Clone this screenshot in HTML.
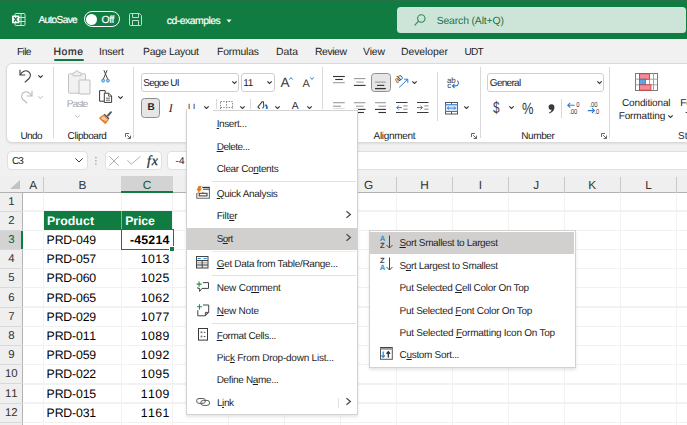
<!DOCTYPE html><html><head><meta charset="utf-8"><title>Excel</title>
<style>
*{box-sizing:border-box;margin:0;padding:0}
html,body{width:687px;height:425px;overflow:hidden;background:#fff}
body{text-rendering:geometricPrecision;font-family:"Liberation Sans",sans-serif;font-size:10.4px;color:#242424;position:relative}
.a{position:absolute}
.t{position:absolute;white-space:nowrap;line-height:14px;height:14px;margin-top:1px}
.m{font-size:10px;color:#1f1f1f;margin-top:1.4px}
.c{margin-top:0.2px;font-kerning:none;font-size:12.3px;color:#000}
.g{color:#a6a6a6}
.r{font-size:10px}
u{text-decoration:underline;text-underline-offset:1px;text-decoration-thickness:1px}
svg{position:absolute;overflow:visible}
.vs{position:absolute;width:1px;background:#d9d9d9}
.hs{position:absolute;height:1px;background:#e1e1e1}
.box{position:absolute;background:#fff;border:1px solid #cfcfcf;border-radius:3px}
</style></head><body>
<!-- title bar -->
<div class="a" id="title" style="left:0;top:0;width:687px;height:39px;background:#107c41"></div>
<div class="a" style="left:0;top:0;width:687px;height:0.8px;background:#257349"></div>
<div class="a" id="chrome" style="left:0;top:39px;width:687px;height:154px;background:#f1f1f1"></div>

<!-- title content -->
<svg id="xlicon" style="left:12.4px;top:13.4px" width="14" height="13" viewBox="0 0 14 13">
 <rect x="3" y="0.5" width="10" height="12" rx="1" fill="none" stroke="#cfe5d8" stroke-width="1"></rect>
 <path d="M3 4.5H13M3 8.5H13M9 0.5V12.5" stroke="#cfe5d8" stroke-width="1" fill="none"></path>
 <rect x="0" y="2.5" width="7.4" height="7.8" rx="0.6" fill="#fff"></rect>
 <path d="M2 4.2L5.4 8.6M5.4 4.2L2 8.6" stroke="#107c41" stroke-width="1.3" fill="none"></path>
</svg>
<span class="t" style="left: 38.4px; color: rgb(255, 255, 255); font-size: 10.1px; -webkit-text-stroke: 0.2px rgb(255, 255, 255); top: 12.7px; letter-spacing: -0.64px;">AutoSave</span>
<div class="a" style="left:83.9px;top:11.1px;width:36.2px;height:16.1px;border:1px solid #fff;border-radius:9px"></div>
<div class="a" style="left:86.1px;top:13.6px;width:11px;height:11px;border-radius:5.5px;background:#fff"></div>
<span class="t" style="left: 101.6px; color: rgb(255, 255, 255); -webkit-text-stroke: 0.2px rgb(255, 255, 255); top: 12.5px; letter-spacing: -0.44px;">Off</span>
<svg id="save" style="left:129px;top:13px" width="13" height="13" viewBox="0 0 13 13" fill="none" stroke="#c2dece" stroke-width="1">
 <path d="M0.5 1.5a1 1 0 0 1 1-1H10.5L12.5 2.5V11.5a1 1 0 0 1-1 1H1.5a1 1 0 0 1-1-1Z"></path>
 <path d="M3.5 0.5V4.5H9.5V0.5M3.5 12.5V7.5H9.5V12.5"></path>
</svg>
<span class="t" style="left: 166.8px; color: rgb(255, 255, 255); -webkit-text-stroke: 0.2px rgb(255, 255, 255); top: 13.8px; letter-spacing: -0.49px;">cd-examples</span>
<svg style="left:226.3px;top:18.6px" width="6" height="4" viewBox="0 0 6 4"><path d="M0.5 0.5H5.5L3 3.5Z" fill="#fff"></path></svg>
<div class="a" style="left:397.2px;top:6.8px;width:289px;height:26px;background:#cde5d9;border-radius:3.5px"></div>
<svg style="left:414px;top:14px" width="12" height="12" viewBox="0 0 12 12" fill="none" stroke="#2f8556" stroke-width="1.1"><circle cx="7.3" cy="4.5" r="3.7"></circle><path d="M4.6 7.2L0.6 11.3"></path></svg>
<span class="t" style="left: 436.7px; color: rgb(30, 113, 69); top: 13.7px; letter-spacing: -0.14px;">Search (Alt+Q)</span>

<!-- tabs -->
<span class="t" style="left: 17px; font-size: 10.2px; top: 44.5px; letter-spacing: -0.64px;">File</span>
<span class="t" style="left: 53.5px; -webkit-text-stroke: 0.22px rgb(36, 36, 36); top: 44.5px; letter-spacing: 0.59px;">Home</span>
<div class="a" style="left:53.5px;top:59px;width:30px;height:2px;background:#107c41;border-radius:1px"></div>
<span class="t" style="left: 99px; top: 44.5px; letter-spacing: -0.2px;">Insert</span>
<span class="t" style="left: 143px; top: 44.5px; letter-spacing: -0.24px;">Page Layout</span>
<span class="t" style="left: 217px; top: 44.5px; letter-spacing: -0.19px;">Formulas</span>
<span class="t" style="left: 276px; top: 44.5px; letter-spacing: 0.02px;">Data</span>
<span class="t" style="left: 315px; top: 44.5px; letter-spacing: -0.42px;">Review</span>
<span class="t" style="left: 363px; top: 44.5px; letter-spacing: -0.11px;">View</span>
<span class="t" style="left: 401px; top: 44.5px; letter-spacing: -0.05px;">Developer</span>
<span class="t" style="left: 464.6px; font-size: 10.1px; top: 44.5px; letter-spacing: -0.87px;">UDT</span>

<!-- ribbon -->
<div class="a" id="ribbon" style="left:5.5px;top:63px;width:700px;height:79.5px;background:#fff;border:1px solid #dadada;border-radius:6px;box-shadow:0 1px 2px rgba(0,0,0,.08)"></div>
<div class="vs" style="left:53px;top:67px;height:71px"></div>
<div class="vs" style="left:133px;top:67px;height:71px"></div>
<div class="vs" style="left:322px;top:67px;height:71px"></div>
<div class="vs" style="left:436.5px;top:72px;height:49px"></div>
<div class="vs" style="left:480px;top:67px;height:71px"></div>
<div class="vs" style="left:609px;top:67px;height:71px"></div>
<div class="vs" style="left:215.5px;top:98.5px;height:19px"></div>
<div class="vs" style="left:250px;top:98.5px;height:19px"></div>
<div class="vs" style="left:561px;top:99px;height:18.5px"></div>

<!-- undo group -->
<svg id="undo" style="left:19px;top:69px" width="13" height="14" viewBox="0 0 13 14" fill="none" stroke="#3a3a3a" stroke-width="1.1">
 <path d="M1 0.8V6H6.2"></path><path d="M1.3 5.7C3 2.5 6.5 0.8 9.3 2.5C12 4.2 12 7.5 10 9.5L5.8 13.4"></path>
</svg>
<svg class="chev" style="left:38px;top:75px" width="5" height="3" viewBox="0 0 5 3"><path d="M0.3 0.3L2.5 2.5L4.7 0.3" fill="none" stroke="#333" stroke-width="1.1"></path></svg>
<svg id="redo" style="left:19.5px;top:89.5px" width="13" height="14" viewBox="0 0 13 14" fill="none" stroke="#b9b9b9" stroke-width="1.1">
 <g transform="translate(13,0) scale(-1,1)"><path d="M1 0.8V6H6.2"></path><path d="M1.3 5.7C3 2.5 6.5 0.8 9.3 2.5C12 4.2 12 7.5 10 9.5L5.8 13.4"></path></g>
</svg>
<svg class="chev" style="left:38px;top:95.5px" width="5" height="3" viewBox="0 0 5 3"><path d="M0.3 0.3L2.5 2.5L4.7 0.3" fill="none" stroke="#b9b9b9" stroke-width="1"></path></svg>
<span class="t r" style="left: 20.4px; top: 128.5px; letter-spacing: -0.57px;">Undo</span>

<!-- clipboard group -->
<svg id="paste" style="left:68px;top:69.6px" width="23" height="25" viewBox="0 0 23 25" fill="none" stroke="#c3c3c3" stroke-width="1">
 <path d="M5.5 3.8H1.3a0.8 0.8 0 0 0-0.8 0.8V22.4a0.8 0.8 0 0 0 0.8 0.8H16.7a0.8 0.8 0 0 0 0.8-0.8V4.6a0.8 0.8 0 0 0-0.8-0.8H12.5" fill="#f1f1f1"></path>
 <path d="M5 5.8V3.4a0.8 0.8 0 0 1 0.8-0.8h1.4a1.8 1.8 0 0 1 3.6 0h1.4a0.8 0.8 0 0 1 0.8 0.8V5.8Z" fill="#f1f1f1"></path>
 <rect x="11" y="10" width="11" height="14" rx="0.5" fill="#f4f4f4" stroke="#bdbdbd"></rect>
</svg>
<span class="t r g" style="left: 66.7px; top: 97px; letter-spacing: -0.97px;">Paste</span>
<svg class="chev" style="left:74.5px;top:114.5px" width="5" height="3" viewBox="0 0 5 3"><path d="M0.3 0.3L2.5 2.5L4.7 0.3" fill="none" stroke="#b9b9b9" stroke-width="1"></path></svg>
<svg id="cut" style="left:101px;top:70px" width="9" height="13" viewBox="0 0 9 13" fill="none">
 <path d="M2.9 0.2L6.7 9.2M6.1 0.2L2.3 9.2" stroke="#444" stroke-width="1"></path>
 <circle cx="2.1" cy="10.6" r="1.5" fill="#9ccaf0" stroke="#3a8ede" stroke-width="0.9"></circle><circle cx="6.9" cy="10.6" r="1.5" fill="#9ccaf0" stroke="#3a8ede" stroke-width="0.9"></circle>
</svg>
<svg id="copy" style="left:99px;top:90.4px" width="13" height="13" viewBox="0 0 13 13" fill="none" stroke="#3a3a3a" stroke-width="1">
 <path d="M5 11.2H0.6V0.6H6.2V2.8"></path>
 <path d="M5.3 3.2H9.8L12.6 6V12.4H5.3Z" fill="#fff"></path>
 <path d="M9.6 3.4V6.2H12.4" stroke-width="0.8"></path>
 <path d="M7 8.2H11M7 10.2H11" stroke-width="0.9" stroke="#555"></path>
</svg>
<svg class="chev" style="left:117.7px;top:96px" width="5" height="3" viewBox="0 0 5 3"><path d="M0.3 0.3L2.5 2.5L4.7 0.3" fill="none" stroke="#333" stroke-width="1.1"></path></svg>
<svg id="fpaint" style="left:99px;top:110.5px" width="14" height="13" viewBox="0 0 14 13" fill="none">
 <path d="M9 4.5L12 1.2" stroke="#555" stroke-width="1.9" stroke-linecap="round"></path>
 <path d="M5.2 3.2L10 7.8" stroke="#444" stroke-width="1.2"></path>
 <path d="M4.6 4.2L9.2 8.6L6.2 12.4L0.6 7.2Z" fill="#f6c9a0" stroke="#e8761c" stroke-width="1.1" stroke-linejoin="round"></path>
 <path d="M2.2 8.6L7.4 10.8" stroke="#e8761c" stroke-width="1"></path>
</svg>
<span class="t r" style="left: 67.6px; top: 128.5px; letter-spacing: -0.44px;">Clipboard</span>
<svg class="launch" style="left:124.5px;top:132.5px" width="6" height="6" viewBox="0 0 6 6" fill="none" stroke="#555" stroke-width="0.9"><path d="M0.5 4V0.5H4"></path><path d="M2.2 2.2L5.3 5.3M5.5 2.6V5.5H2.6"></path></svg>

<!-- font group -->
<div class="box" style="left:141px;top:73px;width:97.5px;height:19px"></div>
<span class="t r" style="left: 143.3px; top: 76.1px; letter-spacing: -0.79px;">Segoe UI</span>
<svg class="chev" style="left:231.5px;top:81px" width="5" height="3" viewBox="0 0 5 3"><path d="M0.3 0.3L2.5 2.5L4.7 0.3" fill="none" stroke="#333" stroke-width="1.1"></path></svg>
<div class="box" style="left:241px;top:73px;width:33.5px;height:19px"></div>
<span class="t r" style="left: 243.3px; letter-spacing: -0.4px; top: 76.1px;">11</span>
<svg class="chev" style="left:267.3px;top:81px" width="5" height="3" viewBox="0 0 5 3"><path d="M0.3 0.3L2.5 2.5L4.7 0.3" fill="none" stroke="#333" stroke-width="1.1"></path></svg>
<span class="t" style="left: 280.4px; font-size: 13.6px; color: rgb(58, 58, 58); top: 74.5px;">A</span>
<svg style="left:289px;top:76.5px" width="4" height="3" viewBox="0 0 4 3"><path d="M0.3 2.6L2 0.6L3.7 2.6" fill="none" stroke="#2b7cd3" stroke-width="1"></path></svg>
<span class="t" style="left: 302.6px; font-size: 11px; color: rgb(58, 58, 58); top: 75.5px;">A</span>
<svg style="left:309.6px;top:76.8px" width="4" height="3" viewBox="0 0 4 3"><path d="M0.3 0.4L2 2.4L3.7 0.4" fill="none" stroke="#2b7cd3" stroke-width="1"></path></svg>

<div class="a" style="left:141px;top:98px;width:19px;height:19.8px;background:#e6e6e6;border:1px solid #8f8f8f;border-radius:3.5px"></div>
<span class="t" style="left: 147.5px; font-weight: bold; font-size: 10px; top: 100.2px;">B</span>
<span class="t" style="left: 168.8px; font-family: &quot;Liberation Serif&quot;, serif; font-style: italic; font-size: 12px; top: 100.2px;">I</span>
<span class="t" style="left: 187.8px; font-size: 10.6px; color: rgb(85, 85, 85); top: 100.2px;">U</span>
<svg class="chev" style="left:204.2px;top:106.2px" width="5" height="3" viewBox="0 0 5 3"><path d="M0.3 0.3L2.5 2.5L4.7 0.3" fill="none" stroke="#333" stroke-width="1.1"></path></svg>
<svg id="borders" style="left:220px;top:101px" width="13" height="13" viewBox="0 0 13 13" fill="none" stroke="#8a8a8a" stroke-width="1" stroke-dasharray="1.5 1.2"><rect x="0.5" y="0.5" width="12" height="12"></rect><path d="M6.5 0.5V12.5M0.5 6.5H12.5"></path></svg>
<svg class="chev" style="left:240px;top:106.2px" width="5" height="3" viewBox="0 0 5 3"><path d="M0.3 0.3L2.5 2.5L4.7 0.3" fill="none" stroke="#333" stroke-width="1.1"></path></svg>
<svg id="fill" style="left:257px;top:101px" width="11" height="12" viewBox="0 0 11 12" fill="none" stroke="#444" stroke-width="1.1"><path d="M2.8 7.8L0.9 6L5 0.8H6.4L6.8 5.4L5.6 7.6"></path><path d="M8.4 3.6C10 5 10.4 6.6 9.6 8.4" stroke="#1f6fd0" stroke-width="1.7"></path></svg>
<svg class="chev" style="left:274.8px;top:106.2px" width="5" height="3" viewBox="0 0 5 3"><path d="M0.3 0.3L2.5 2.5L4.7 0.3" fill="none" stroke="#333" stroke-width="1.1"></path></svg>
<span class="t" style="left: 291.7px; font-size: 10.3px; color: rgb(46, 46, 46); top: 98.5px;">A</span>
<svg class="chev" style="left:307.2px;top:106.2px" width="5" height="3" viewBox="0 0 5 3"><path d="M0.3 0.3L2.5 2.5L4.7 0.3" fill="none" stroke="#333" stroke-width="1.1"></path></svg>

<!-- alignment group -->
<svg id="al1" style="left:333px;top:75px" width="12" height="9" viewBox="0 0 12 9" fill="none" stroke-width="1.1"><path d="M0 1.5H11.8" stroke="#333"></path><path d="M2.2 4.5H9.8" stroke="#333"></path><path d="M0 7.7H11.8" stroke="#9a9a9a"></path></svg>
<svg id="al2" style="left:354px;top:77px" width="12" height="10" viewBox="0 0 12 10" fill="none" stroke-width="1.1"><path d="M0 1.6H11.5" stroke="#9a9a9a"></path><path d="M2.4 5.1H9.6" stroke="#9a9a9a"></path><path d="M0 8.4H11.5" stroke="#333"></path></svg>
<div class="a" style="left:371px;top:73px;width:19.5px;height:19px;background:#e6e6e6;border:1px solid #8f8f8f;border-radius:3.5px"></div>
<svg id="al3" style="left:375.2px;top:80px" width="12" height="10" viewBox="0 0 12 10" fill="none" stroke-width="1.1"><path d="M0 2.1H10.8" stroke="#9a9a9a"></path><path d="M2 5.4H9.3" stroke="#333"></path><path d="M0 8.6H10.8" stroke="#333" stroke-width="1.3"></path></svg>
<svg id="orient" style="left:394px;top:75px" width="15" height="14" viewBox="0 0 15 14" fill="none"><path d="M5.2 12.4L13.6 4.4M13.8 4.2H10.2M13.8 4.2V7.8" stroke="#2b7cd3" stroke-width="1"></path><text x="0" y="0" transform="translate(3.2,8.6) rotate(-45)" font-size="8.2" fill="#3a3a3a" font-family="Liberation Sans, sans-serif" letter-spacing="-0.4">ab</text></svg>
<svg class="chev" style="left:412.2px;top:81px" width="5" height="3" viewBox="0 0 5 3"><path d="M0.3 0.3L2.5 2.5L4.7 0.3" fill="none" stroke="#333" stroke-width="1.1"></path></svg>

<svg id="al4" style="left:333px;top:101px" width="12" height="13" viewBox="0 0 12 13" fill="none" stroke-width="1.1"><path d="M0 1.7H11.8" stroke="#9a9a9a"></path><path d="M0 5.2H8" stroke="#9a9a9a"></path><path d="M0 8.4H11.8" stroke="#333"></path><path d="M0 11.5H8" stroke="#333"></path></svg>
<svg id="al5" style="left:354px;top:101px" width="12" height="13" viewBox="0 0 12 13" fill="none" stroke-width="1.1"><path d="M0 1.7H11.5" stroke="#9a9a9a"></path><path d="M2 5.2H9.6" stroke="#9a9a9a"></path><path d="M0 8.4H11.5" stroke="#333"></path><path d="M3 11.5H9.9" stroke="#333"></path></svg>
<svg id="al6" style="left:375px;top:101px" width="12" height="13" viewBox="0 0 12 13" fill="none" stroke-width="1.1"><path d="M0 1.7H11" stroke="#9a9a9a"></path><path d="M3.4 5.2H11" stroke="#9a9a9a"></path><path d="M0 8.4H11" stroke="#333"></path><path d="M3.4 11.5H11" stroke="#333"></path></svg>
<svg id="ind1" style="left:395.5px;top:101px" width="12" height="13" viewBox="0 0 12 13" fill="none" stroke-width="1"><path d="M0 1.5H11.5M0 11.5H11.5" stroke="#3a3a3a"></path><path d="M7.3 4.9H11.5M7.3 8.2H11.5" stroke="#8a8a8a"></path><path d="M6 6.6H0.8M2.8 4.6L0.8 6.6L2.8 8.6" stroke="#2b7cd3"></path></svg>
<svg id="ind2" style="left:416.5px;top:101px" width="12" height="13" viewBox="0 0 12 13" fill="none" stroke-width="1"><path d="M0 1.5H11.5M0 11.5H11.5" stroke="#3a3a3a"></path><path d="M7.3 4.9H11.5M7.3 8.2H11.5" stroke="#8a8a8a"></path><path d="M0 6.6H5.4M3.4 4.6L5.4 6.6L3.4 8.6" stroke="#2b7cd3"></path></svg>
<span class="t r" style="left: 373.6px; top: 128.5px; letter-spacing: -0.33px;">Alignment</span>

<svg id="wrap" style="left:447px;top:76px" width="13" height="13" viewBox="0 0 13 13" fill="none"><text x="0" y="6.6" font-size="8" fill="#3a3a3a" font-family="Liberation Sans, sans-serif" letter-spacing="-0.3">ab</text><text x="0.2" y="11.6" font-size="8" fill="#3a3a3a" font-family="Liberation Sans, sans-serif">c</text><path d="M10.3 4.6C12.4 6.4 11.6 9.8 8.6 9.9H5.6M7.6 7.8L5.4 9.9L7.6 12" stroke="#2b7cd3" stroke-width="1.1"></path></svg>
<svg id="merge" style="left:445px;top:101.5px" width="13" height="13" viewBox="0 0 13 13" fill="none" stroke="#555" stroke-width="1"><rect x="0.5" y="0.5" width="12" height="11.5"></rect><path d="M6.5 0.5V3M6.5 9.5V12"></path><rect x="0.5" y="2.7" width="12" height="6.8" fill="#d6e8f9" stroke="#2b7cd3"></rect><path d="M2.3 6.1H10.7M4 4.5L2.4 6.1L4 7.7M9 4.5L10.6 6.1L9 7.7" stroke="#2b7cd3" stroke-width="0.9"></path></svg>
<svg class="chev" style="left:464.2px;top:106.2px" width="5" height="3" viewBox="0 0 5 3"><path d="M0.3 0.3L2.5 2.5L4.7 0.3" fill="none" stroke="#333" stroke-width="1.1"></path></svg>
<svg class="launch" style="left:471px;top:132.5px" width="6" height="6" viewBox="0 0 6 6" fill="none" stroke="#555" stroke-width="0.9"><path d="M0.5 4V0.5H4"></path><path d="M2.2 2.2L5.3 5.3M5.5 2.6V5.5H2.6"></path></svg>

<!-- number group -->
<div class="box" style="left:487px;top:73px;width:117px;height:19px"></div>
<span class="t r" style="left: 489.8px; top: 75.8px; letter-spacing: -0.7px;">General</span>
<svg class="chev" style="left:596.5px;top:81px" width="5" height="3" viewBox="0 0 5 3"><path d="M0.3 0.3L2.5 2.5L4.7 0.3" fill="none" stroke="#333" stroke-width="1.1"></path></svg>
<span class="t" style="left: 492.6px; font-size: 16.4px; color: rgb(68, 68, 68); transform: scaleX(0.72); transform-origin: 0px 50%; top: 100.4px;">$</span>
<svg class="chev" style="left:509px;top:106.2px" width="5" height="3" viewBox="0 0 5 3"><path d="M0.3 0.3L2.5 2.5L4.7 0.3" fill="none" stroke="#333" stroke-width="1.1"></path></svg>
<span class="t" style="left: 522px; font-size: 16.2px; color: rgb(58, 58, 58); transform: scaleX(0.8); transform-origin: 0px 50%; top: 100.6px;">%</span>
<svg id="comma" style="left:547.5px;top:103.5px" width="7" height="10" viewBox="0 0 7 10"><path d="M3.4 0.2a2.9 2.9 0 0 1 3 3C6.4 6.4 4 8.6 1.2 9.4L0.9 8.7C2.4 8 3.5 7 3.7 5.8A2.8 2.8 0 0 1 0.6 3A2.8 2.8 0 0 1 3.4 0.2Z" fill="#3a3a3a"></path></svg>
<svg id="incdec" style="left:566.5px;top:102px" width="14" height="13" viewBox="0 0 14 13" fill="none"><path d="M7.6 3.2H0.8M3.2 0.8L0.8 3.2L3.2 5.6" stroke="#2b7cd3" stroke-width="1.1"></path><text transform="translate(9.2,5.1) scale(0.82,1)" font-size="7.2" fill="#3a3a3a" font-family="Liberation Sans, sans-serif">0</text><text transform="translate(2.2,11.5) scale(0.82,1)" font-size="7.2" fill="#3a3a3a" font-family="Liberation Sans, sans-serif">.00</text></svg>
<svg id="decdec" style="left:587.3px;top:102px" width="14" height="13" viewBox="0 0 14 13" fill="none"><text transform="translate(2.4,5.1) scale(0.82,1)" font-size="7.2" fill="#3a3a3a" font-family="Liberation Sans, sans-serif">.00</text><path d="M0.8 8.6H7.4M5 6.2L7.4 8.6L5 11" stroke="#2b7cd3" stroke-width="1.1"></path><text transform="translate(7.4,11.5) scale(0.82,1)" font-size="7.2" fill="#3a3a3a" font-family="Liberation Sans, sans-serif">.0</text></svg>
<span class="t r" style="left: 521.3px; top: 128.5px; letter-spacing: -0.42px;">Number</span>
<svg class="launch" style="left:600.5px;top:132.5px" width="6" height="6" viewBox="0 0 6 6" fill="none" stroke="#555" stroke-width="0.9"><path d="M0.5 4V0.5H4"></path><path d="M2.2 2.2L5.3 5.3M5.5 2.6V5.5H2.6"></path></svg>

<!-- styles group -->
<svg id="condfmt" style="left:635px;top:73px" width="23" height="18" viewBox="0 0 23 18" fill="none">
 <rect x="0.5" y="0.5" width="22" height="17" fill="#fff" stroke="#7a7a7a" stroke-width="1"></rect>
 <path d="M4.5 0.5V17.5M14.5 0.5V17.5M18.5 0.5V17.5M0.5 6.2H22.5M0.5 11.8H22.5" stroke="#9a9a9a" stroke-width="0.9"></path>
 <rect x="4.5" y="0.8" width="10" height="5.4" fill="#f28b94" stroke="#d13438" stroke-width="0.8"></rect>
 <rect x="4.5" y="6.2" width="6" height="5.6" fill="#5aa5e6" stroke="#2b7cd3" stroke-width="0.8"></rect>
 <rect x="4.5" y="11.8" width="11.5" height="5.4" fill="#f28b94" stroke="#d13438" stroke-width="0.8"></rect>
</svg>
<span class="t r" style="left: 622px; top: 96.3px; letter-spacing: -0.15px;">Conditional</span>
<span class="t r" style="left: 618.7px; top: 108.8px; letter-spacing: -0.14px;">Formatting</span>
<svg class="chev" style="left:668.3px;top:114.8px" width="5" height="3" viewBox="0 0 5 3"><path d="M0.3 0.3L2.5 2.5L4.7 0.3" fill="none" stroke="#333" stroke-width="1.1"></path></svg>
<span class="t r" style="left: 680.2px; top: 96.3px;">Fo</span>
<span class="t r" style="left: 685.3px; top: 108.8px;">T</span>
<span class="t r" style="left: 678px; top: 128.5px;">Sty</span>

<!-- formula bar -->
<div class="box" style="left:6.5px;top:150.7px;width:81.2px;height:19.5px;border-color:#e0e0e0;border-radius:4px"></div>
<span class="t r" style="left: 12px; top: 153.8px; letter-spacing: -1px;">C3</span>
<svg style="left:75px;top:158px" width="8" height="5" viewBox="0 0 8 5"><path d="M0.4 0.4L4 4L7.6 0.4" fill="none" stroke="#3a3a3a" stroke-width="1"></path></svg>
<svg style="left:95px;top:156.5px" width="2" height="8" viewBox="0 0 2 8" fill="#8a8a8a"><rect x="0.3" y="0" width="1.2" height="1.2"></rect><rect x="0.3" y="3.2" width="1.2" height="1.2"></rect><rect x="0.3" y="6.4" width="1.2" height="1.2"></rect></svg>
<div class="box" style="left:104.5px;top:150.7px;width:57.8px;height:19.5px;border-color:#e0e0e0;border-radius:4px"></div>
<svg style="left:109px;top:155.7px" width="10" height="10" viewBox="0 0 10 10"><path d="M0.3 0.3L9.7 9.7M9.7 0.3L0.3 9.7" stroke="#b0b0b0" stroke-width="1" fill="none"></path></svg>
<svg style="left:127px;top:156px" width="14" height="9" viewBox="0 0 14 9"><path d="M0.3 4.2L4.4 8.2L13.4 0.3" stroke="#b0b0b0" stroke-width="1" fill="none"></path></svg>
<span class="t" style="left: 147px; font-family: &quot;Liberation Serif&quot;, serif; font-style: italic; font-size: 13.8px; color: rgb(42, 42, 42); letter-spacing: 0.9px; -webkit-text-stroke: 0.25px rgb(42, 42, 42); top: 153.2px;">fx</span>
<div class="box" style="left:166.7px;top:150.7px;width:540px;height:19.5px;border-color:#e0e0e0;border-radius:4px"></div>
<span class="t r" style="left: 175.6px; top: 153.5px;">-4</span>

<!-- grid -->
<div class="a" id="grid" style="left:0;top:192.6px;width:687px;height:232px;background:#fff"></div>
<div class="a" id="colhdr" style="left:0;top:176px;width:687px;height:16.6px;background:#efefef;border-bottom:1px solid #b2b2b2"></div>
<div class="a" id="rowhdr" style="left:0;top:192.6px;width:23.1px;height:233px;background:#efefef;border-right:1px solid #b2b2b2"></div>
<div class="a" style="left:42.9px;top:193px;width:1.4px;height:232px;background:#f2f2f2"></div>
<div class="a" style="left:43.1px;top:177px;width:1px;height:16px;background:#c9c9c9"></div>
<div class="a" style="left:120.6px;top:193px;width:1.4px;height:232px;background:#f2f2f2"></div>
<div class="a" style="left:120.8px;top:177px;width:1px;height:16px;background:#c9c9c9"></div>
<div class="a" style="left:172.1px;top:193px;width:1.4px;height:232px;background:#f2f2f2"></div>
<div class="a" style="left:172.3px;top:177px;width:1px;height:16px;background:#c9c9c9"></div>
<div class="a" style="left:228.0px;top:193px;width:1.4px;height:232px;background:#f2f2f2"></div>
<div class="a" style="left:228.2px;top:177px;width:1px;height:16px;background:#c9c9c9"></div>
<div class="a" style="left:283.9px;top:193px;width:1.4px;height:232px;background:#f2f2f2"></div>
<div class="a" style="left:284.1px;top:177px;width:1px;height:16px;background:#c9c9c9"></div>
<div class="a" style="left:339.9px;top:193px;width:1.4px;height:232px;background:#f2f2f2"></div>
<div class="a" style="left:340.1px;top:177px;width:1px;height:16px;background:#c9c9c9"></div>
<div class="a" style="left:395.9px;top:193px;width:1.4px;height:232px;background:#f2f2f2"></div>
<div class="a" style="left:396.1px;top:177px;width:1px;height:16px;background:#c9c9c9"></div>
<div class="a" style="left:451.8px;top:193px;width:1.4px;height:232px;background:#f2f2f2"></div>
<div class="a" style="left:452.0px;top:177px;width:1px;height:16px;background:#c9c9c9"></div>
<div class="a" style="left:507.7px;top:193px;width:1.4px;height:232px;background:#f2f2f2"></div>
<div class="a" style="left:507.9px;top:177px;width:1px;height:16px;background:#c9c9c9"></div>
<div class="a" style="left:563.6px;top:193px;width:1.4px;height:232px;background:#f2f2f2"></div>
<div class="a" style="left:563.8px;top:177px;width:1px;height:16px;background:#c9c9c9"></div>
<div class="a" style="left:619.6px;top:193px;width:1.4px;height:232px;background:#f2f2f2"></div>
<div class="a" style="left:619.8px;top:177px;width:1px;height:16px;background:#c9c9c9"></div>
<div class="a" style="left:675.9px;top:193px;width:1.4px;height:232px;background:#f2f2f2"></div>
<div class="a" style="left:676.1px;top:177px;width:1px;height:16px;background:#c9c9c9"></div>
<div class="a" style="left:23px;top:210.3px;width:664px;height:1.4px;background:#f2f2f2"></div>
<div class="a" style="left:0;top:210.5px;width:23px;height:1px;background:#d9d9d9"></div>
<div class="a" style="left:23px;top:229.5px;width:664px;height:1.4px;background:#f2f2f2"></div>
<div class="a" style="left:0;top:229.7px;width:23px;height:1px;background:#d9d9d9"></div>
<div class="a" style="left:23px;top:248.7px;width:664px;height:1.4px;background:#f2f2f2"></div>
<div class="a" style="left:0;top:248.9px;width:23px;height:1px;background:#d9d9d9"></div>
<div class="a" style="left:23px;top:267.9px;width:664px;height:1.4px;background:#f2f2f2"></div>
<div class="a" style="left:0;top:268.1px;width:23px;height:1px;background:#d9d9d9"></div>
<div class="a" style="left:23px;top:287.1px;width:664px;height:1.4px;background:#f2f2f2"></div>
<div class="a" style="left:0;top:287.3px;width:23px;height:1px;background:#d9d9d9"></div>
<div class="a" style="left:23px;top:306.4px;width:664px;height:1.4px;background:#f2f2f2"></div>
<div class="a" style="left:0;top:306.6px;width:23px;height:1px;background:#d9d9d9"></div>
<div class="a" style="left:23px;top:325.6px;width:664px;height:1.4px;background:#f2f2f2"></div>
<div class="a" style="left:0;top:325.8px;width:23px;height:1px;background:#d9d9d9"></div>
<div class="a" style="left:23px;top:344.8px;width:664px;height:1.4px;background:#f2f2f2"></div>
<div class="a" style="left:0;top:345.0px;width:23px;height:1px;background:#d9d9d9"></div>
<div class="a" style="left:23px;top:364.0px;width:664px;height:1.4px;background:#f2f2f2"></div>
<div class="a" style="left:0;top:364.2px;width:23px;height:1px;background:#d9d9d9"></div>
<div class="a" style="left:23px;top:383.2px;width:664px;height:1.4px;background:#f2f2f2"></div>
<div class="a" style="left:0;top:383.4px;width:23px;height:1px;background:#d9d9d9"></div>
<div class="a" style="left:23px;top:402.4px;width:664px;height:1.4px;background:#f2f2f2"></div>
<div class="a" style="left:0;top:402.6px;width:23px;height:1px;background:#d9d9d9"></div>
<div class="a" style="left:23px;top:421.6px;width:664px;height:1.4px;background:#f2f2f2"></div>
<div class="a" style="left:0;top:421.8px;width:23px;height:1px;background:#d9d9d9"></div>
<div class="a" style="left:121.3px;top:176.3px;width:51.4px;height:16.4px;background:#d3d3d3;border-bottom:2px solid #107c41"></div>
<div class="a" style="left:0;top:230.6px;width:23.1px;height:18.6px;background:#d3d3d3;border-right:2px solid #107c41"></div>
<svg style="left:9.8px;top:180.2px" width="10" height="9" viewBox="0 0 10 9"><path d="M10 0V9H0Z" fill="#c2c2c2"></path></svg>
<span class="t c" style="left: 23.1px; width: 20px; text-align: center; color: rgb(51, 51, 51); font-size: 11.8px; top: 177.5px;">A</span>
<span class="t c" style="left: 72.5px; width: 20px; text-align: center; color: rgb(51, 51, 51); font-size: 11.8px; top: 177.5px;">B</span>
<span class="t c" style="left: 137.1px; width: 20px; text-align: center; color: rgb(14, 92, 47); font-size: 11.8px; top: 177.5px;">C</span>
<span class="t c" style="left: 190.8px; width: 20px; text-align: center; color: rgb(51, 51, 51); font-size: 11.8px; top: 177.5px;">D</span>
<span class="t c" style="left: 246.6px; width: 20px; text-align: center; color: rgb(51, 51, 51); font-size: 11.8px; top: 177.5px;">E</span>
<span class="t c" style="left: 302.6px; width: 20px; text-align: center; color: rgb(51, 51, 51); font-size: 11.8px; top: 177.5px;">F</span>
<span class="t c" style="left: 358.6px; width: 20px; text-align: center; color: rgb(51, 51, 51); font-size: 11.8px; top: 177.5px;">G</span>
<span class="t c" style="left: 414.6px; width: 20px; text-align: center; color: rgb(51, 51, 51); font-size: 11.8px; top: 177.5px;">H</span>
<span class="t c" style="left: 470.4px; width: 20px; text-align: center; color: rgb(51, 51, 51); font-size: 11.8px; top: 177.5px;">I</span>
<span class="t c" style="left: 526.3px; width: 20px; text-align: center; color: rgb(51, 51, 51); font-size: 11.8px; top: 177.5px;">J</span>
<span class="t c" style="left: 582.3px; width: 20px; text-align: center; color: rgb(51, 51, 51); font-size: 11.8px; top: 177.5px;">K</span>
<span class="t c" style="left: 638.5px; width: 20px; text-align: center; color: rgb(51, 51, 51); font-size: 11.8px; top: 177.5px;">L</span>
<span class="t c" style="left: 0px; width: 22.6px; text-align: center; color: rgb(51, 51, 51); font-size: 11.4px; top: 194.6px;">1</span>
<span class="t c" style="left: 0px; width: 22.6px; text-align: center; color: rgb(51, 51, 51); font-size: 11.4px; top: 213.6px;">2</span>
<span class="t c" style="left: 0px; width: 22.6px; text-align: center; color: rgb(14, 92, 47); font-size: 11.4px; top: 232.8px;">3</span>
<span class="t c" style="left: 0px; width: 22.6px; text-align: center; color: rgb(51, 51, 51); font-size: 11.4px; top: 252px;">4</span>
<span class="t c" style="left: 0px; width: 22.6px; text-align: center; color: rgb(51, 51, 51); font-size: 11.4px; top: 271.2px;">5</span>
<span class="t c" style="left: 0px; width: 22.6px; text-align: center; color: rgb(51, 51, 51); font-size: 11.4px; top: 290.4px;">6</span>
<span class="t c" style="left: 0px; width: 22.6px; text-align: center; color: rgb(51, 51, 51); font-size: 11.4px; top: 309.7px;">7</span>
<span class="t c" style="left: 0px; width: 22.6px; text-align: center; color: rgb(51, 51, 51); font-size: 11.4px; top: 328.9px;">8</span>
<span class="t c" style="left: 0px; width: 22.6px; text-align: center; color: rgb(51, 51, 51); font-size: 11.4px; top: 348.1px;">9</span>
<span class="t c" style="left: 0px; width: 22.6px; text-align: center; color: rgb(51, 51, 51); font-size: 11.4px; top: 367.3px;">10</span>
<span class="t c" style="left: 0px; width: 22.6px; text-align: center; color: rgb(51, 51, 51); font-size: 11.4px; top: 386.5px;">11</span>
<span class="t c" style="left: 0px; width: 22.6px; text-align: center; color: rgb(51, 51, 51); font-size: 11.4px; top: 405.7px;">12</span>
<div class="a" style="left:43.8px;top:211.3px;width:128.6px;height:18.4px;background:#107c41"></div>
<div class="a" style="left:121.1px;top:211.3px;width:1px;height:18.4px;background:#fff;opacity:.45"></div>
<span class="t c" style="left: 47px; color: rgb(255, 255, 255); font-weight: bold; top: 213.5px; letter-spacing: 0.09px;">Product</span>
<span class="t c" style="left: 125.2px; color: rgb(255, 255, 255); font-weight: bold; top: 213.5px; letter-spacing: -0.1px;">Price</span>
<span class="t c" style="left: 46.6px; top: 232.8px; letter-spacing: -0.16px;">PRD-049</span>
<span class="t c" style="left: 46.6px; top: 252px; letter-spacing: -0.16px;">PRD-057</span>
<span class="t c" style="right: 517.2px; top: 252px; letter-spacing: 0.45px;">1013</span>
<span class="t c" style="left: 46.6px; top: 271.2px; letter-spacing: -0.16px;">PRD-060</span>
<span class="t c" style="right: 517.2px; top: 271.2px; letter-spacing: 0.45px;">1025</span>
<span class="t c" style="left: 46.6px; top: 290.4px; letter-spacing: -0.16px;">PRD-065</span>
<span class="t c" style="right: 517.2px; top: 290.4px; letter-spacing: 0.45px;">1062</span>
<span class="t c" style="left: 46.6px; top: 309.7px; letter-spacing: -0.16px;">PRD-029</span>
<span class="t c" style="right: 517.2px; top: 309.7px; letter-spacing: 0.45px;">1077</span>
<span class="t c" style="left: 46.6px; top: 328.9px; letter-spacing: -0.16px;">PRD-011</span>
<span class="t c" style="right: 517.2px; top: 328.9px; letter-spacing: 0.45px;">1089</span>
<span class="t c" style="left: 46.6px; top: 348.1px; letter-spacing: -0.16px;">PRD-059</span>
<span class="t c" style="right: 517.2px; top: 348.1px; letter-spacing: 0.45px;">1092</span>
<span class="t c" style="left: 46.6px; top: 367.3px; letter-spacing: -0.16px;">PRD-022</span>
<span class="t c" style="right: 517.2px; top: 367.3px; letter-spacing: 0.45px;">1095</span>
<span class="t c" style="left: 46.6px; top: 386.5px; letter-spacing: -0.16px;">PRD-015</span>
<span class="t c" style="right: 517.2px; top: 386.5px; letter-spacing: 0.45px;">1109</span>
<span class="t c" style="left: 46.6px; top: 405.7px; letter-spacing: -0.16px;">PRD-031</span>
<span class="t c" style="right: 517.2px; top: 405.7px; letter-spacing: 0.45px;">1161</span>
<div class="a" style="left:121px;top:229.2px;width:52.5px;height:21.2px;border:1.6px solid #107c41;background:#fff"></div>
<span class="t c" style="right: 517.4px; font-weight: bold; top: 232.5px; letter-spacing: 0.24px;">-45214</span>
<div class="a" style="left:169.2px;top:246.4px;width:5px;height:4.8px;background:#107c41;border:1px solid #fff;border-right:0;border-bottom:0"></div>

<!-- context menu -->
<div class="a" id="menu" style="left:185.6px;top:110px;width:172px;height:305px;background:#fff;border:1px solid #d2d2d2;box-shadow:0 2px 3px rgba(0,0,0,.10)"></div>
<div class="a" style="left:185.6px;top:108.7px;width:172px;height:1.4px;background:#fff;border-left:1px solid #d2d2d2"></div><div class="a" style="left:186.6px;top:110px;width:26px;height:2px;background:#fff"></div>
<div class="a" style="left:186.9px;top:227.5px;width:169.8px;height:22.2px;background:#d2d0ce"></div>
<div class="hs" style="left:212.3px;top:181.4px;width:144px"></div>
<div class="hs" style="left:212.3px;top:251.2px;width:144px;background:#ececec"></div>
<div class="hs" style="left:212.3px;top:274.8px;width:144px"></div>
<div class="hs" style="left:212.3px;top:322.8px;width:144px"></div>
<span class="t m" style="left: 216.7px; top: 116.8px; letter-spacing: -0.39px;"><u>I</u>nsert...</span>
<span class="t m" style="left: 216.7px; top: 139.4px; letter-spacing: -0.5px;"><u>D</u>elete...</span>
<span class="t m" style="left: 216.7px; top: 161.8px; letter-spacing: -0.36px;">Clear Co<u>n</u>tents</span>
<span class="t m" style="left: 216.7px; top: 186.7px; letter-spacing: -0.3px;"><u>Q</u>uick Analysis</span>
<span class="t m" style="left: 216.7px; top: 208.8px; letter-spacing: -0.25px;">Filt<u>e</u>r</span>
<span class="t m" style="left: 216.7px; top: 231.4px; letter-spacing: -0.58px;">S<u>o</u>rt</span>
<span class="t m" style="left: 216.7px; top: 256.4px; letter-spacing: -0.32px;"><u>G</u>et Data from Table/Range...</span>
<span class="t m" style="left: 216.7px; top: 280.8px; letter-spacing: -0.2px;">New Co<u>m</u>ment</span>
<span class="t m" style="left: 216.7px; top: 303.3px; letter-spacing: -0.23px;"><u>N</u>ew Note</span>
<span class="t m" style="left: 216.7px; top: 328.4px; letter-spacing: -0.38px;"><u>F</u>ormat Cells...</span>
<span class="t m" style="left: 216.7px; top: 350.7px; letter-spacing: -0.23px;">Pic<u>k</u> From Drop-down List...</span>
<span class="t m" style="left: 216.7px; top: 373.1px; letter-spacing: -0.35px;">Define N<u>a</u>me...</span>
<span class="t m" style="left: 216.9px; top: 395.3px; letter-spacing: -0.39px;">L<u>i</u>nk</span>
<svg class="arr" style="left:345.8px;top:211.4px" width="5" height="7" viewBox="0 0 5 7"><path d="M0.5 0.3L4.4 3.5L0.5 6.7" fill="none" stroke="#444" stroke-width="1.15"></path></svg>
<svg class="arr" style="left:345.8px;top:234.0px" width="5" height="7" viewBox="0 0 5 7"><path d="M0.5 0.3L4.4 3.5L0.5 6.7" fill="none" stroke="#444" stroke-width="1.15"></path></svg>
<svg class="arr" style="left:345.8px;top:398.3px" width="5" height="7" viewBox="0 0 5 7"><path d="M0.5 0.3L4.4 3.5L0.5 6.7" fill="none" stroke="#444" stroke-width="1.15"></path></svg>
<div class="vs" style="left:337.8px;top:397.5px;height:10.5px;background:#e1e1e1"></div>

<!-- menu icons -->
<svg id="qa" style="left:196px;top:186px" width="14" height="13" viewBox="0 0 14 13" fill="none">
 <path d="M0.8 7V12.2H13.4V1.4H6.5" stroke="#6a6a6a" stroke-width="1.1"></path>
 <path d="M6.5 1.5H13.4M7 3.2H13.4" stroke="#333" stroke-width="1"></path>
 <rect x="3.2" y="7.3" width="7.8" height="2.6" stroke="#333" stroke-width="1"></rect>
 <path d="M7 5.8V7.3" stroke="#555" stroke-width="0.9"></path>
 <path d="M2.6 0L5.8 0L4.4 2.6H6.2L1.2 8.2L2.4 4.4H0.4Z" fill="#e8791e"></path>
</svg>
<svg id="gd" style="left:196.4px;top:256px" width="13" height="13" viewBox="0 0 13 13" fill="none" stroke="#444" stroke-width="1">
 <rect x="0.5" y="4.5" width="11.5" height="7.5" fill="#e9e9e9" stroke="none"></rect>
 <rect x="0.5" y="0.5" width="11.5" height="11.5"></rect><path d="M0.5 4.5H12M0.5 9H12"></path><path d="M0.5 6.8H12" stroke="#888" stroke-width="0.7"></path><path d="M6.2 4.5V12"></path><path d="M1.6 2.5H4.8M7.6 2.5H10.8" stroke="#2a90e0" stroke-width="1.2"></path>
</svg>
<svg id="nc" style="left:196px;top:281px" width="13" height="12" viewBox="0 0 13 12" fill="none">
 <path d="M7 1.6H12.5V7.4H6L3.6 10.4V7.4H1.8V6.2" stroke="#444" stroke-width="1"></path>
 <path d="M3.1 0.4V5.8M0.6 3.1H5.6" stroke="#1e8f4e" stroke-width="1.1"></path>
</svg>
<svg id="nn" style="left:196.8px;top:303.5px" width="12" height="13" viewBox="0 0 12 13" fill="none">
 <path d="M11.7 8.4H8.4V11.8Z" fill="#9a9a9a"></path>
 <path d="M6 1H11.7V8.4L8.4 11.8H0.8V6.2" stroke="#444" stroke-width="1"></path><path d="M11.7 8.4H8.4V11.8" stroke="#444" stroke-width="0.9"></path>
 <path d="M2.5 0.2V5.4M0 2.8H5.2" stroke="#1e8f4e" stroke-width="1.1"></path>
</svg>
<svg id="fc" style="left:198.2px;top:328.4px" width="10" height="13" viewBox="0 0 10 13" fill="none" stroke="#3a3a3a" stroke-width="1">
 <rect x="0.5" y="0.5" width="9" height="11.6"></rect><rect x="2.6" y="3.4" width="1.8" height="1.8" fill="#777" stroke="none"></rect><rect x="2.6" y="7.6" width="1.8" height="1.8" fill="#777" stroke="none"></rect><path d="M5.8 4.3H7.4M5.8 8.5H7.4" stroke-width="0.9"></path>
</svg>
<svg id="lk" style="left:196px;top:398px" width="14" height="8" viewBox="0 0 14 8" fill="none" stroke="#5a5a5a" stroke-width="1">
 <rect x="0.6" y="0.5" width="8.8" height="4.8" rx="2.4"></rect><rect x="4.8" y="2.4" width="8.8" height="5" rx="2.5"></rect>
</svg>

<!-- submenu -->
<div class="a" id="submenu" style="left:368.6px;top:230.2px;width:207px;height:137.4px;background:#fff;border:1px solid #d2d2d2;box-shadow:0 2px 3px rgba(0,0,0,.10)"></div>
<div class="a" style="left:370.1px;top:232.2px;width:204.3px;height:21.5px;background:#d2d0ce"></div>
<span class="t m" style="left: 399.5px; top: 235.8px; letter-spacing: -0.36px;"><u>S</u>ort Smallest to Largest</span>
<span class="t m" style="left: 399.5px; top: 258.4px; letter-spacing: -0.36px;">S<u>o</u>rt Largest to Smallest</span>
<span class="t m" style="left: 399.5px; top: 280.8px; letter-spacing: -0.3px;">Put Selected <u>C</u>ell Color On Top</span>
<span class="t m" style="left: 399.5px; top: 303.4px; letter-spacing: -0.28px;">Put Selected <u>F</u>ont Color On Top</span>
<span class="t m" style="left: 399.5px; top: 325.3px; letter-spacing: -0.24px;">Put Selected <u>F</u>ormatting Icon On Top</span>
<span class="t m" style="left: 399.5px; top: 347.9px; letter-spacing: -0.31px;">C<u>u</u>stom Sort...</span>
<svg id="saz" style="left:379px;top:235px" width="15" height="14" viewBox="0 0 15 14" fill="none">
 <text x="0.7" y="6.1" font-size="7.6" font-weight="bold" fill="#2a90e0" font-family="Liberation Sans, sans-serif">A</text>
 <text x="1" y="13.2" font-size="7.6" font-weight="bold" fill="#444" font-family="Liberation Sans, sans-serif">Z</text>
 <path d="M10.5 0.5V13M7.5 10L10.5 13L13.5 10" stroke="#444" stroke-width="1"></path>
</svg>
<svg id="sza" style="left:379px;top:257.2px" width="15" height="14" viewBox="0 0 15 14" fill="none">
 <text x="1" y="6.1" font-size="7.6" font-weight="bold" fill="#444" font-family="Liberation Sans, sans-serif">Z</text>
 <text x="0.7" y="13.2" font-size="7.6" font-weight="bold" fill="#2a90e0" font-family="Liberation Sans, sans-serif">A</text>
 <path d="M10.5 0.5V13M7.5 10L10.5 13L13.5 10" stroke="#444" stroke-width="1"></path>
</svg>
<svg id="cs" style="left:380.2px;top:347.4px" width="13" height="13" viewBox="0 0 13 13" fill="none">
 <rect x="0.5" y="0.5" width="11.8" height="11.8" stroke="#555" stroke-width="1"></rect><rect x="0.5" y="0.8" width="11.8" height="2" fill="#9a9a9a"></rect><path d="M0.5 0.5H12.3" stroke="#444" stroke-width="1"></path>
 <path d="M3.2 4.4V10.4M1.4 8.4L3.2 10.4L5 8.4" stroke="#2a90e0" stroke-width="1.3"></path><path d="M8.3 10.6V4.8M6.5 6.8L8.3 4.8L10.1 6.8" stroke="#333" stroke-width="1.3"></path>
</svg>

</body></html>
